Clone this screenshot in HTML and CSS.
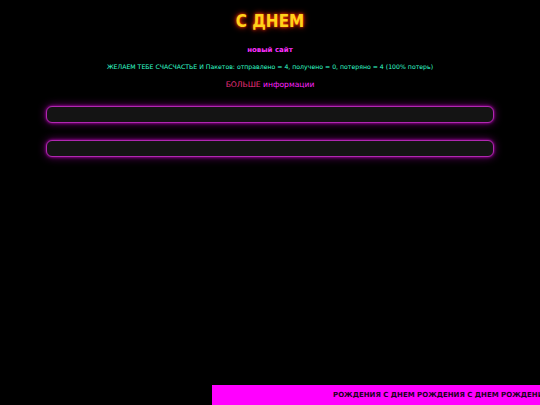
FILE: index.html
```html
<!DOCTYPE html>
<html lang="ru">
<head>
<meta charset="utf-8">
<title>С ДНЕМ</title>
<link rel="stylesheet" href="styles.css">
</head>
<body>
<header class="top">
  <h1 class="title">С ДНЕМ</h1>
  <p class="subtitle">новый сайт</p>
  <p class="wish">ЖЕЛАЕМ ТЕБЕ СЧАСЧАСТЬЕ И Пакетов: отправлено = 4, получено = 0, потеряно = 4 (100% потерь)</p>
  <p class="more"><span class="more-a">БОЛЬШЕ</span> <span class="more-b">информации</span></p>
</header>
<main class="boxes">
  <div class="box"></div>
  <div class="box"></div>
</main>
<div class="ticker">
  <div class="ticker-text">РОЖДЕНИЯ С ДНЕМ РОЖДЕНИЯ С ДНЕМ РОЖДЕНИЯ С ДНЕМ</div>
</div>
</body>
</html>
```
FILE: styles.css
```css
html, body {
  margin: 0;
  padding: 0;
  background: #000;
  height: 100%;
  overflow: hidden;
}
body {
  font-family: "Comic Sans MS", "DejaVu Sans", sans-serif;
}
.top {
  display: flex;
  flex-direction: column;
  align-items: center;
  padding-top: 10px;
}
.title {
  margin: 0;
  font-family: "Comic Sans MS", "DejaVu Sans Condensed", "DejaVu Sans", sans-serif;
  font-size: 17px;
  line-height: 22px;
  font-weight: bold;
  color: #ffd21a;
  text-shadow: 0 0 3px #ff3c00, 0 0 6px #ff2000;
}
.subtitle {
  margin: 13px 0 0;
  font-size: 7px;
  line-height: 10px;
  font-weight: bold;
  color: #ff30ff;
}
.wish {
  margin: 7px 0 0;
  font-size: 6.2px;
  line-height: 10px;
  color: #33ffcc;
}
.more {
  margin: 8px 0 0;
  font-size: 7.6px;
  line-height: 10px;
}
.more-a {
  color: #f0307f;
}
.more-b {
  color: #ff20ff;
}
.boxes {
  display: flex;
  flex-direction: column;
  gap: 17px;
  padding: 16px 46px 0;
}
.box {
  height: 15px;
  background: #141414;
  border: 1px solid #b028b0;
  border-radius: 6px;
  box-shadow: 0 0 3px #b000b0, 0 0 8px #700070;
}
.ticker {
  position: fixed;
  left: 212px;
  right: 0;
  bottom: 0;
  height: 20px;
  background: #ff00ff;
  overflow: hidden;
  display: flex;
  align-items: center;
}
.ticker-text {
  white-space: nowrap;
  padding-left: 121px;
  font-size: 7px;
  font-weight: bold;
  color: #1a0020;
}
```
